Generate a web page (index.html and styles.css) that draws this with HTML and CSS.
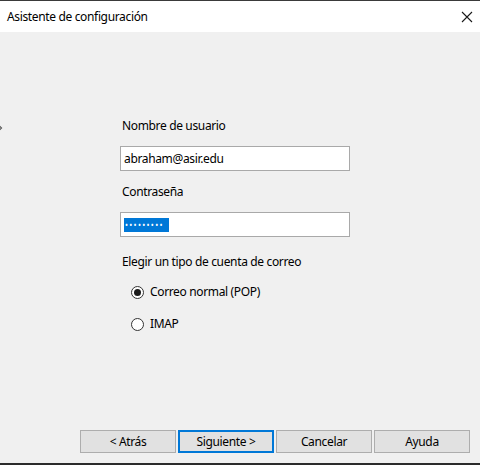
FILE: index.html
```html
<!DOCTYPE html>
<html lang="es">
<head>
<meta charset="utf-8">
<title>Asistente de configuración</title>
<link rel="stylesheet" href="styles.css">
</head>
<body>
<div class="window">
  <div class="titlebar">
    <span class="title">Asistente de configuración</span>
    <svg class="close" width="12" height="12" viewBox="0 0 12 12" aria-label="Cerrar">
      <path d="M1 1 L11 11 M11 1 L1 11" stroke="#1a1a1a" stroke-width="1.1" fill="none"/>
    </svg>
  </div>
  <div class="content">
    <svg class="side-arrow" width="6" height="10" viewBox="0 0 6 10">
      <path d="M0.5 1 L4.5 5 L0.5 9" stroke="#555" stroke-width="1.2" fill="none"/>
    </svg>
    <div class="form">
      <div class="label">Nombre de usuario</div>
      <div class="input input-user">abraham@asir.edu</div>
      <div class="label label-pass">Contraseña</div>
      <div class="input input-pass"><span class="selected">&#8226;&#8226;&#8226;&#8226;&#8226;&#8226;&#8226;&#8226;&#8226;</span></div>
      <div class="label label-type">Elegir un tipo de cuenta de correo</div>
      <div class="radio-row radio-first">
        <span class="radio checked"></span>
        <span>Correo normal (POP)</span>
      </div>
      <div class="radio-row">
        <span class="radio"></span>
        <span>IMAP</span>
      </div>
    </div>
    <div class="buttons">
      <button class="btn">&lt; Atrás</button>
      <button class="btn btn-default">Siguiente &gt;</button>
      <button class="btn">Cancelar</button>
      <button class="btn">Ayuda</button>
    </div>
  </div>
</div>
</body>
</html>
```

FILE: styles.css
```css
* { box-sizing: border-box; }
html, body { margin: 0; padding: 0; }
body {
  width: 480px;
  height: 465px;
  overflow: hidden;
  font-family: "Noto Sans", "Open Sans", sans-serif;
  font-size: 12px;
  letter-spacing: -0.35px;
  color: #000;
}
.window {
  width: 480px;
  height: 465px;
  display: flex;
  flex-direction: column;
  border-top: 1px solid #3a3a3a;
  border-bottom: 2px solid #2b2b2b;
  background: #f0f0f0;
}
.titlebar {
  height: 31px;
  background: #fff;
  display: flex;
  align-items: center;
  justify-content: space-between;
  padding: 0 7px 0 7px;
}
.title {
  line-height: 16px;
  margin-top: 1px;
}
.close {
  margin-top: 1px;
}
.content {
  position: relative;
  flex: 1;
  display: flex;
  flex-direction: column;
}
.side-arrow {
  position: absolute;
  left: -3px;
  top: 91px;
}
.form {
  margin-top: 86px;
  margin-left: 120px;
  display: flex;
  flex-direction: column;
  align-items: flex-start;
}
.label {
  line-height: 16px;
  margin-left: 2px;
}
.input {
  width: 230px;
  height: 25px;
  background: #fff;
  border: 1px solid #a9a9a9;
  padding: 0 3px;
  display: flex;
  align-items: center;
  line-height: 16px;
}
.input-user { margin-top: 12px; }
.label-pass { margin-top: 13px; }
.input-pass { margin-top: 12px; }
.selected {
  background: #0078d7;
  color: #fff;
  height: 14px;
  width: 45px;
  font-size: 8px;
  letter-spacing: 1.3px;
  padding-left: 1px;
  display: inline-flex;
  align-items: center;
  overflow: hidden;
  white-space: nowrap;
}
.label-type { margin-top: 17px; }
.radio-row {
  display: flex;
  align-items: center;
  gap: 6px;
  margin-left: 11px;
  line-height: 16px;
  margin-top: 16px;
}
.radio-first { margin-top: 14px; }
.radio {
  width: 13px;
  height: 13px;
  border: 1px solid #333;
  border-radius: 50%;
  background: #fff;
  display: flex;
  align-items: center;
  justify-content: center;
}
.radio.checked::after {
  content: "";
  width: 7px;
  height: 7px;
  border-radius: 50%;
  background: #1a1a1a;
}
.buttons {
  margin-top: auto;
  margin-bottom: 10px;
  display: flex;
  justify-content: flex-end;
  gap: 2px;
  padding-right: 10px;
}
.btn {
  width: 96px;
  height: 23px;
  background: #e1e1e1;
  border: 1px solid #adadad;
  font-family: inherit;
  font-size: 12px;
  letter-spacing: -0.35px;
  color: #000;
  padding: 0;
  line-height: 16px;
}
.btn-default {
  border: 2px solid #0078d7;
}
```
